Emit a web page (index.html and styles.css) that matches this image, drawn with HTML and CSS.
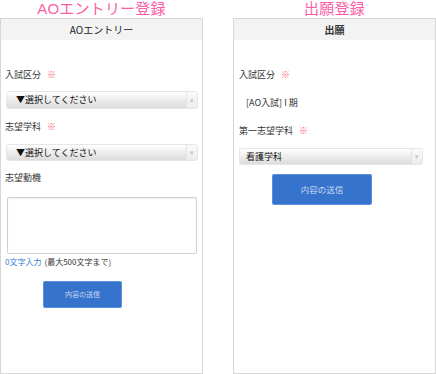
FILE: index.html
```html
<!DOCTYPE html>
<html lang="ja">
<head>
<meta charset="utf-8">
<link rel="stylesheet" href="styles.css">
</head>
<body>
<div class="screens">
  <section class="screen">
    <h1 class="title">AOエントリー登録</h1>
    <div class="panel">
      <div class="panel-head">AOエントリー</div>
      <div class="panel-body left">
        <div class="label l1">入試区分<span class="req">※</span></div>
        <div class="select s1"><span class="sel-text">▼選択してください</span><span class="sel-arrow">▾</span></div>
        <div class="label l2">志望学科<span class="req">※</span></div>
        <div class="select s2"><span class="sel-text">▼選択してください</span><span class="sel-arrow">▾</span></div>
        <div class="label l3">志望動機</div>
        <div class="textarea"></div>
        <div class="count"><span class="count-num">0文字入力</span><span class="count-max">(最大500文字まで)</span></div>
        <div class="btn btn-left">内容の送信</div>
      </div>
    </div>
  </section>
  <section class="screen">
    <h1 class="title">出願登録</h1>
    <div class="panel">
      <div class="panel-head bold">出願</div>
      <div class="panel-body right">
        <div class="label r1">入試区分<span class="req">※</span></div>
        <div class="value">[AO入試] I 期</div>
        <div class="label r2">第一志望学科<span class="req">※</span></div>
        <div class="select s3"><span class="sel-text">看護学科</span><span class="sel-arrow">▾</span></div>
        <div class="btn btn-right">内容の送信</div>
      </div>
    </div>
  </section>
</div>
</body>
</html>
```
FILE: styles.css
```css
html, body {
  margin: 0;
  padding: 0;
  background: #ffffff;
}
body {
  font-family: "Noto Sans CJK JP", "Noto Sans", sans-serif;
  color: #333;
  width: 436px;
  height: 374px;
  overflow: hidden;
}
.screens {
  display: flex;
  gap: 30px;
}
.screen {
  width: 203px;
  display: flex;
  flex-direction: column;
}
.title {
  margin: 0;
  height: 18px;
  line-height: 18px;
  font-family: "Liberation Sans", "Noto Sans CJK JP", sans-serif;
  font-size: 15px;
  font-weight: normal;
  color: #fb5ea6;
  text-align: center;
  letter-spacing: 0.2px;
}
.panel {
  border: 1px solid #d6d6d6;
  height: 354px;
  background: #fff;
}
.panel-head {
  height: 21px;
  line-height: 21px;
  background: #f3f3f3;
  text-align: center;
  font-size: 10px;
  color: #222;
}
.panel-head.bold { font-weight: bold; color: #333; }
.panel-body {
  display: flex;
  flex-direction: column;
  align-items: flex-start;
}
.panel-body.left { padding: 0 5px 0 4px; }
.panel-body.right { padding: 0 13px 0 5px; }
.label {
  font-size: 9px;
  line-height: 12px;
  height: 12px;
  color: #333;
}
.req {
  color: #ff5a6e;
  margin-left: 6px;
  font-size: 9px;
}
.l1 { margin-top: 29px; }
.l2 { margin-top: 13px; }
.l3 { margin-top: 12px; }
.select {
  align-self: stretch;
  display: flex;
  align-items: stretch;
  border-radius: 2px;
  background: linear-gradient(#ffffff, #f2f2f2 35%, #dcdcdc);
  box-shadow: 0 0 0 1px #e6e6e6;
  font-size: 9px;
  color: #111;
}
.select .sel-text {
  flex: 1;
  padding-left: 9px;
}
.select .sel-arrow {
  width: 10px;
  background: linear-gradient(#fafafa, #ececec);
  border-left: 1px solid #e4e4e4;
  color: #c4c4c4;
  font-size: 7px;
  text-align: center;
  border-radius: 0 2px 2px 0;
}
.s1 { margin: 11px 0 0 2px; height: 16px; line-height: 16px; }
.s2 { margin: 12px 0 0 2px; height: 15px; line-height: 15px; }
.textarea {
  align-self: stretch;
  margin: 13px 0 0 2px;
  height: 55px;
  border: 1px solid #cfcfcf;
  border-radius: 2px;
  box-shadow: inset 0 1px 2px rgba(0,0,0,0.06);
}
.count {
  margin-top: 3px;
  font-size: 8px;
  line-height: 10px;
  color: #333;
}
.count-num { color: #3a7bd5; }
.count-max { margin-left: 3px; }
.btn {
  background: #3673cd;
  color: #c9d9f2;
  text-align: center;
  border-radius: 1px;
  box-shadow: 0 0 0 1px #5c8fdc;
}
.btn-left {
  margin: 15px 0 0 39px;
  width: 77px;
  height: 25px;
  line-height: 25px;
  font-size: 7px;
}
.r1 { margin-top: 29px; }
.value {
  margin: 16px 0 0 7px;
  font-size: 9px;
  line-height: 12px;
  color: #333;
}
.r2 { margin-top: 16px; }
.s3 {
  margin: 12px 0 0 1px;
  height: 15px;
  line-height: 15px;
}
.s3 .sel-text { padding-left: 6px; }
.btn-right {
  margin: 11px 0 0 34px;
  width: 98px;
  height: 29px;
  line-height: 29px;
  font-size: 8.5px;
}
```
